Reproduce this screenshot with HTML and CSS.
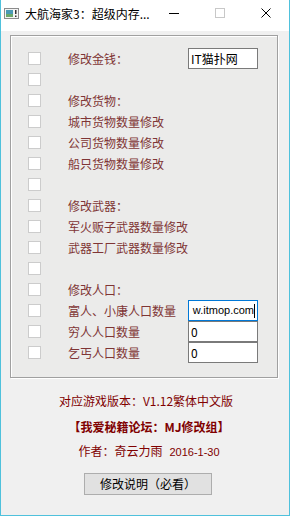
FILE: index.html
```html
<!DOCTYPE html>
<html lang="zh-CN">
<head>
<meta charset="utf-8">
<title>大航海家3：超级内存修改器</title>
<link rel="stylesheet" href="styles.css">
</head>
<body>
<div class="window">
  <div class="titlebar">
    <svg class="app-icon" width="15" height="11" viewBox="0 0 15 11">
      <rect x="0.5" y="0.5" width="14" height="10" fill="#f4f4f4" stroke="#8c8c8c"/>
      <rect x="2" y="2" width="7" height="7" fill="#4a9ab5"/>
      <rect x="2" y="6" width="7" height="3" fill="#6aa86a"/>
      <rect x="11" y="2" width="1.5" height="4" fill="#333"/>
      <rect x="11" y="7.5" width="1.5" height="1.5" fill="#333"/>
    </svg>
    <span class="title">大航海家3：超级内存...</span>
    <div class="caps">
      <span class="cap"><svg width="10" height="10" viewBox="0 0 10 10"><line x1="0" y1="5.5" x2="10" y2="5.5" stroke="#000" stroke-width="1"/></svg></span>
      <span class="cap"><svg width="10" height="10" viewBox="0 0 10 10"><rect x="0.5" y="0.5" width="9" height="9" fill="none" stroke="#c8c8c8" stroke-width="1"/></svg></span>
      <span class="cap"><svg width="10" height="10" viewBox="0 0 10 10"><path d="M0.5 0.5 L9.5 9.5 M9.5 0.5 L0.5 9.5" stroke="#000" stroke-width="1" fill="none"/></svg></span>
    </div>
  </div>
  <div class="client">
    <div class="group">
      <div class="row"><span class="check"></span><span class="label">修改金钱：</span><span class="field">IT猫扑网</span></div>
      <div class="row"><span class="check"></span></div>
      <div class="row"><span class="check"></span><span class="label">修改货物：</span></div>
      <div class="row"><span class="check"></span><span class="label">城市货物数量修改</span></div>
      <div class="row"><span class="check"></span><span class="label">公司货物数量修改</span></div>
      <div class="row"><span class="check"></span><span class="label">船只货物数量修改</span></div>
      <div class="row"><span class="check"></span></div>
      <div class="row"><span class="check"></span><span class="label">修改武器：</span></div>
      <div class="row"><span class="check"></span><span class="label">军火贩子武器数量修改</span></div>
      <div class="row"><span class="check"></span><span class="label">武器工厂武器数量修改</span></div>
      <div class="row"><span class="check"></span></div>
      <div class="row"><span class="check"></span><span class="label">修改人口：</span></div>
      <div class="row"><span class="check"></span><span class="label">富人、小康人口数量</span><span class="field focus"><span class="scroll">w.itmop.com</span><span class="caret"></span></span></div>
      <div class="row"><span class="check"></span><span class="label">穷人人口数量</span><span class="field">0</span></div>
      <div class="row"><span class="check"></span><span class="label">乞丐人口数量</span><span class="field">0</span></div>
    </div>
    <div class="footer">
      <div class="line ver">对应游戏版本：V1.12繁体中文版</div>
      <div class="line forum">【我爱秘籍论坛：MJ修改组】</div>
      <div class="line author">作者：奇云力雨<span class="date">2016-1-30</span></div>
      <div class="button">修改说明（必看）</div>
    </div>
  </div>
</div>
</body>
</html>
```
FILE: styles.css
```css
body {
  margin: 0;
  background: #ffffff;
}

.window {
  width: 290px;
  height: 516px;
  box-sizing: border-box;
  border: 1px solid #4fc1dc;
  border-top: none;
  background: #f0f0f0;
  display: flex;
  flex-direction: column;
  font-family: "Noto Sans CJK SC", sans-serif;
  font-size: 12px;
}

.titlebar {
  flex: none;
  height: 26px;
  padding-bottom: 5px;
  background: #ffffff;
  display: flex;
  align-items: center;
}

.app-icon {
  margin-left: 3px;
  flex: none;
}

.title {
  margin-left: 6px;
  flex: 1;
  color: #000;
  white-space: nowrap;
  font-size: 12px;
}

.caps {
  display: flex;
  flex: none;
}

.cap {
  width: 46px;
  height: 26px;
  display: flex;
  align-items: center;
  justify-content: center;
}

.client {
  flex: 1;
  padding: 4px 0 0 9px;
}

.group {
  width: 268px;
  height: 343px;
  box-sizing: border-box;
  border: 1px solid #a0a0a0;
  box-shadow: inset 1px 1px 0 #ffffff, 1px 1px 0 #ffffff;
  background: #ebebea;
  padding: 12px 0 0 17px;
}

.row {
  height: 21px;
  display: flex;
  align-items: center;
}

.check {
  width: 13px;
  height: 13px;
  box-sizing: border-box;
  border: 1px solid #cccccc;
  background: #ffffff;
  margin-right: 27px;
  flex: none;
}

.label {
  width: 120px;
  flex: none;
  color: #7f3535;
  line-height: 21px;
  white-space: nowrap;
}

.field {
  width: 70px;
  height: 21px;
  box-sizing: border-box;
  border: 1px solid #7a7a7a;
  background: #ffffff;
  color: #000;
  padding: 0 2px;
  line-height: 19px;
  overflow: hidden;
  white-space: nowrap;
  flex: none;
}

.field.focus {
  border-color: #0078d7;
  display: flex;
  justify-content: flex-end;
  align-items: center;
  padding: 0 2px 0 1px;
}

.scroll {
  flex: none;
  font-family: "Liberation Sans", sans-serif;
  font-size: 11px;
}

.caret {
  flex: none;
  width: 1px;
  height: 14px;
  background: #000;
}

.footer {
  display: flex;
  flex-direction: column;
  align-items: center;
  margin-top: 15px;
  margin-left: -9px;
}

.line {
  line-height: 16px;
  color: #800000;
  white-space: nowrap;
}

.ver {
  margin-left: 2px;
}

.forum {
  margin-top: 10px;
  margin-left: 8px;
  font-weight: bold;
}

.author {
  margin-top: 8px;
  margin-left: 8px;
}

.date {
  margin-left: 7px;
  font-family: "Liberation Sans", sans-serif;
  font-size: 11px;
}

.button {
  margin-top: 13px;
  margin-left: 6px;
  width: 128px;
  height: 22px;
  box-sizing: border-box;
  border: 1px solid #adadad;
  background: #e1e1e1;
  color: #000;
  text-align: center;
  line-height: 20px;
}
```
